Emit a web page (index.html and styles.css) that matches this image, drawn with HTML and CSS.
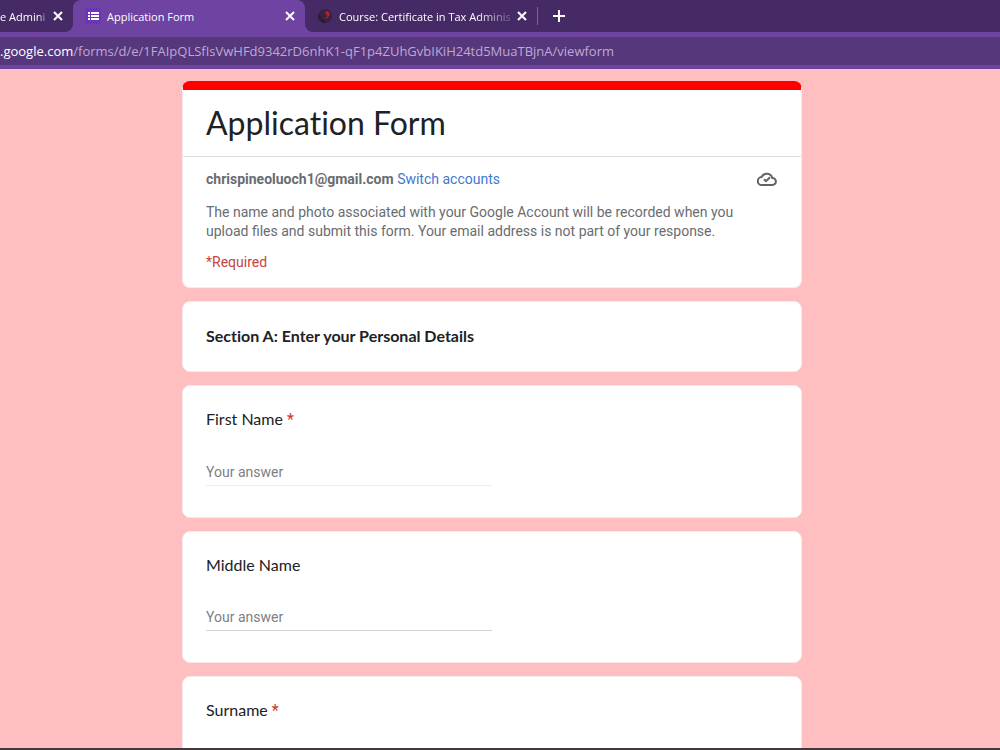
FILE: index.html
```html
<!DOCTYPE html>
<html lang="en">
<head>
    <meta charset="UTF-8">
    <meta name="viewport" content="width=device-width, initial-scale=1.0">
    <title>Application Form</title>
    <link rel="stylesheet" href="styles.css">
</head>
<body>
    <header class="browser">
        <div class="tabs">
            <div class="tab tab-first">
                <span class="tab-title fade">e Admini</span>
                <button class="icon-button" type="button" aria-label="Close tab">
                    <svg width="10" height="10" viewBox="0 0 10 10"><path d="M1 1l8 8M9 1l-8 8"/></svg>
                </button>
            </div>
            <div class="tab tab-active">
                <svg class="favicon" width="16" height="16" viewBox="0 0 16 16">
                    <rect width="16" height="16" rx="2" fill="#6a35b8"/>
                    <path d="M3 4h2v2H3zM6 4h8v2H6zM3 7h2v2H3zM6 7h8v2H6zM3 10h2v2H3zM6 10h8v2H6z" fill="#fff"/>
                </svg>
                <span class="tab-title">Application Form</span>
                <button class="icon-button" type="button" aria-label="Close tab">
                    <svg width="10" height="10" viewBox="0 0 10 10"><path d="M1 1l8 8M9 1l-8 8"/></svg>
                </button>
            </div>
            <div class="tab tab-last">
                <svg class="favicon" width="16" height="16" viewBox="0 0 16 16">
                    <circle cx="8" cy="8" r="7" fill="#3a2140"/>
                    <path d="M8 3c4 0 6 3 4 5-1 2-3 3-5 2 2 0 4-1 3-3L8 6l1-1z" fill="#b3202f"/>
                    <path d="M2 7c0 4 3 7 7 7" fill="none" stroke="#2a1a30" stroke-width="2"/>
                </svg>
                <span class="tab-title fade">Course: Certificate in Tax Adminis</span>
                <button class="icon-button" type="button" aria-label="Close tab">
                    <svg width="10" height="10" viewBox="0 0 10 10"><path d="M1 1l8 8M9 1l-8 8"/></svg>
                </button>
            </div>
            <button class="icon-button new-tab" type="button" aria-label="New tab">
                <svg width="12" height="12" viewBox="0 0 12 12"><path d="M6 0v12M0 6h12"/></svg>
            </button>
        </div>
        <div class="address"><span class="host">.google.com</span>/forms/d/e/1FAIpQLSfIsVwHFd9342rD6nhK1-qF1p4ZUhGvbIKiH24td5MuaTBjnA/viewform</div>
    </header>

    <main class="page">
        <form class="form">
            <section class="card intro">
                <h1>Application Form</h1>
                <div class="account">
                    <div class="account-row">
                        <p><strong>chrispineoluoch1@gmail.com</strong> <a href="#">Switch accounts</a></p>
                        <svg class="cloud" width="20" height="14" viewBox="0 0 20 14">
                            <path d="M5 13a4 4 0 0 1-.4-8A5.700 5.700 0 0 1 15.300 6a3.500 3.500 0 0 1 .2 7z"/>
                            <path d="M7 7.200l2 2 4-4"/>
                        </svg>
                    </div>
                    <p class="notice">The name and photo associated with your Google Account will be recorded when you upload files and submit this form. Your email address is not part of your response.</p>
                    <p class="required">*Required</p>
                </div>
            </section>

            <section class="card">
                <h2>Section A: Enter your Personal Details</h2>
            </section>

            <div class="card question">
                <label for="firstName">First Name <span class="star">*</span></label>
                <input class="light" type="text" id="firstName" placeholder="Your answer" required>
            </div>

            <div class="card question">
                <label for="middleName">Middle Name</label>
                <input type="text" id="middleName" placeholder="Your answer">
            </div>

            <div class="card question">
                <label for="surname">Surname <span class="star">*</span></label>
                <input type="text" id="surname" placeholder="Your answer" required>
            </div>
        </form>
    </main>
    <div class="taskbar"></div>
</body>
</html>
```
FILE: styles.css
```css
* {
    box-sizing: border-box;
}
body {
    display: flex;
    flex-direction: column;
    height: 100vh;
    margin: 0;
    overflow: hidden;
    background-color: #ffbfc0;
    color: #202124;
    font-family: Roboto, Arial, sans-serif;
    font-size: 14px;
}
h1, h2, p {
    margin: 0;
}

/* Browser bar */
.browser {
    flex: none;
    background-color: #6e43a2;
    color: #ffffff;
    font-family: "Open Sans", "Noto Sans", sans-serif;
    padding-bottom: 4px;
}
.tabs {
    display: flex;
    height: 32px;
    background-color: #6e43a2;
}
.tab {
    display: flex;
    align-items: center;
    background-color: #462a66;
    font-size: 11px;
}
.tab-first {
    width: 73px;
    padding-right: 10px;
    border-bottom-right-radius: 8px;
}
.tab-active {
    width: 232px;
    padding: 0 10px 0 12px;
    background-color: #6e43a2;
    border-radius: 8px 8px 0 0;
    box-shadow: 0 -8px 0 8px #462a66;
    clip-path: inset(0);
}
.tab-last {
    width: 232px;
    padding: 0 10px 0 12px;
    border-bottom-left-radius: 8px;
}
.tab-title {
    flex: 1;
    white-space: nowrap;
}
.fade {
    mask-image: linear-gradient(to right, #000 80%, rgba(0, 0, 0, 0.2));
}
.favicon {
    flex: none;
    margin-right: 6px;
}
.icon-button {
    display: flex;
    flex: none;
    align-items: center;
    margin-left: 6px;
    padding: 0;
    border: 0;
    background: none;
    cursor: pointer;
}
.icon-button svg {
    fill: none;
    stroke: #ffffff;
    stroke-width: 2;
}
.new-tab {
    flex: 1;
    margin: 0;
    padding-left: 16px;
    background: linear-gradient(#7a619a, #7a619a) 0 50% / 1px 18px no-repeat #462a66;
}
.address {
    height: 28px;
    margin-top: 5px;
    background-color: #56377c;
    color: #bda9d4;
    font-size: 13px;
    line-height: 28px;
    white-space: nowrap;
    overflow: hidden;
}
.host {
    color: #ffffff;
}

/* Form */
.page {
    flex: 1;
    min-height: 0;
    overflow: hidden;
    padding: 12px 16px 0 0;
}
.form {
    display: flex;
    flex-direction: column;
    gap: 13px;
    max-width: 620px;
    margin: 0 auto;
}
.card {
    padding: 23px 23px 25px;
    background-color: #ffffff;
    border: 1px solid #f7eaec;
    border-radius: 8px;
}
.intro {
    padding: 0;
    border-top: 9px solid #ff0000;
}
h1, h2, label {
    font-family: Lato, sans-serif;
    font-variant-ligatures: none;
}
h1 {
    padding: 12px 23px 13px;
    border-bottom: 1px solid #dadce0;
    font-size: 32px;
    font-weight: 400;
    line-height: 41px;
}
h2 {
    font-size: 16px;
    font-weight: 700;
    line-height: 21px;
}
.account {
    padding: 12px 23px 15px;
    color: #696c70;
    line-height: 20px;
}
.account-row {
    display: flex;
    align-items: center;
    justify-content: space-between;
}
.account a {
    color: #3f78cf;
    text-decoration: none;
}
.cloud {
    margin-right: 1px;
    fill: none;
    stroke: #5f6368;
    stroke-width: 2;
}
.notice {
    max-width: 550px;
    margin-top: 14px;
    line-height: 19px;
}
.required {
    margin-top: 11px;
    color: #c5443c;
}
.question {
    display: flex;
    flex-direction: column;
    align-items: flex-start;
    padding: 22px 23px 31px;
}
label {
    font-size: 16px;
    line-height: 21px;
}
.star {
    color: #d0342c;
    font-family: Roboto, sans-serif;
}
input {
    width: 50%;
    height: 28px;
    margin-top: 28px;
    padding: 0;
    border: 0;
    border-bottom: 1px solid #d2d3d5;
    background: none;
    font-family: inherit;
    font-size: 14px;
}
.light {
    border-bottom-color: #ececee;
}
input::placeholder {
    color: #7d8084;
}

.taskbar {
    flex: none;
    height: 2px;
    background-color: #403a3c;
}
```
